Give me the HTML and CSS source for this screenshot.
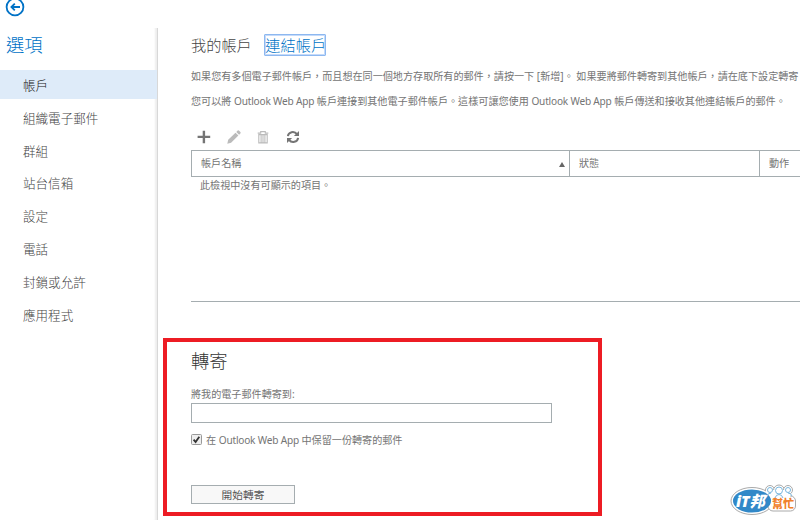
FILE: index.html
```html
<!DOCTYPE html>
<html lang="zh-Hant">
  <head>
    <meta charset="UTF-8" />
    <meta name="viewport" content="width=device-width, initial-scale=1.0" />
    <title>選項 - Outlook Web App</title>
    <link rel="stylesheet" href="styles.css">
  </head>
  <body>
    <header class="topbar">
      <svg class="back" viewBox="0 0 20 20" width="20" height="20">
        <circle cx="10" cy="10" r="8.4" />
        <path d="M15 10H6.5M9.8 6.6L6.4 10l3.4 3.4" />
      </svg>
    </header>

    <div class="layout">
      <nav class="sidebar">
        <h1>選項</h1>
        <ul class="menu">
          <li class="active">帳戶</li>
          <li>組織電子郵件</li>
          <li>群組</li>
          <li>站台信箱</li>
          <li>設定</li>
          <li>電話</li>
          <li>封鎖或允許</li>
          <li>應用程式</li>
        </ul>
      </nav>

      <main class="content">
        <section class="accounts">
          <div class="tabs">
            <span class="tab">我的帳戶</span>
            <span class="tab selected">連結帳戶</span>
          </div>
          <p>如果您有多個電子郵件帳戶，而且想在同一個地方存取所有的郵件，請按一下 [新增]。 如果要將郵件轉寄到其他帳戶，請在底下設定轉寄</p>
          <p>您可以將 <span class="product">Outlook Web App</span> 帳戶連接到其他電子郵件帳戶。這樣可讓您使用 <span class="product">Outlook Web App</span> 帳戶傳送和接收其他連結帳戶的郵件。</p>

          <div class="toolbar">
            <svg class="icon" viewBox="0 0 14 14" width="14" height="14">
              <path d="M5.7 .8h2.4v5h5.1v2.3H8.1v5.1H5.7V8.1H.6V5.8h5.1z" />
            </svg>
            <svg class="icon off" viewBox="0 0 14 14" width="14" height="14">
              <path d="M.3 13.7l.9-3.9L8.5 2.7l2.9 2.9-7.3 7.2zM9.3 1.9L10.7.6q.7-.5 1.4.1l1.3 1.3q.6.7 0 1.4l-1.3 1.4z" />
            </svg>
            <svg class="icon off" viewBox="0 0 14 14" width="14" height="14">
              <path d="M1.7 3.1h3V1.6h4.6v1.5h3M2.8 4.6v8.3h8.4V4.6zM5.1 5v7.5M7 5v7.5M8.9 5v7.5" class="line" />
            </svg>
            <svg class="icon" viewBox="0 0 14 14" width="14" height="14">
              <path d="M1.9 6.2C2.4 1.8 8.3.6 11 4.2M12.1 7.8C11.6 12.2 5.7 13.4 3 9.8" class="arc" />
              <path d="M13 .9v5.2H7.900zM1 13.1V7.900h5.100z" />
            </svg>
          </div>

          <div class="grid-head">
            <div class="col name">帳戶名稱<i class="sort"></i></div>
            <div class="col state">狀態</div>
            <div class="col action">動作</div>
          </div>
          <div class="grid-body">此檢視中沒有可顯示的項目。</div>
        </section>

        <section class="forward">
          <h2>轉寄</h2>
          <label class="field-label" for="address">將我的電子郵件轉寄到:</label>
          <input class="address" id="address" type="text" />
          <div class="keep">
            <svg class="check" viewBox="0 0 11 11" width="11" height="11">
              <rect x=".5" y=".5" width="10" height="10" rx="1" />
              <path d="M2.6 5.7l2 2.4 3.7-5.4" />
            </svg>
            <span>在 <span class="product">Outlook Web App</span> 中保留一份轉寄的郵件</span>
          </div>
          <button class="start" type="button">開始轉寄</button>
        </section>
      </main>
    </div>

    <svg class="badge" viewBox="0 0 68 36" width="68" height="36">
      <g class="people-edge">
        <circle cx="40" cy="6" r="4.5" /><circle cx="49" cy="6.5" r="5.5" /><circle cx="58" cy="6" r="4.5" />
      </g>
      <ellipse class="rim" cx="22" cy="17" rx="21" ry="13.5" />
      <rect class="rim" x="38" y="12" width="27.5" height="15" rx="5" />
      <path class="fill" d="M36 6h24v10H36z" />
      <ellipse class="blue" cx="22" cy="17" rx="19" ry="11.5" />
      <g class="people">
        <circle cx="40" cy="6" r="2.5" /><circle cx="49" cy="6.5" r="3.5" /><circle cx="58" cy="6" r="2.5" />
        <path d="M37 12q1-3 4-3M45 14q1-3.5 4-3.5t4 3.5M58 9q3 0 4 3" />
      </g>
      <text class="it" x="6" y="23">iT邦</text>
      <text class="help" x="42" y="24">幫忙</text>
    </svg>
  </body>
</html>
```
FILE: styles.css
```css
:root {
  --accent: #0072c6;
  --text: #747474;
  --line: #a5adb0;
  --red: #ed1c24;
}

* {
  box-sizing: border-box;
}

body {
  margin: 0;
  height: 520px;
  overflow: hidden;
  background: #fff;
  color: var(--text);
  font-family: "Noto Sans", "Noto Sans CJK TC", sans-serif;
  font-size: 10.1px;
}

.topbar {
  display: flex;
  height: 28px;
  padding-left: 5px;
}

.back {
  margin-top: -3px;
  fill: none;
  stroke: var(--accent);
  stroke-width: 1.8;
}

.layout {
  display: flex;
  height: 492px;
}

.sidebar {
  flex: none;
  width: 158px;
  border-right: 1px solid #d8d8d8;
  box-shadow: inset -3px 0 2px -1px #eee;
}

h1 {
  margin: 0;
  padding-left: 6px;
  height: 42px;
  line-height: 34px;
  font-size: 18.3px;
  font-weight: 300;
  color: var(--accent);
}

.menu {
  margin: 0;
  padding: 0;
  width: 157px;
  list-style: none;
  font-size: 12.55px;
  font-weight: 300;
  color: #444;
}

.menu li {
  height: 29px;
  margin-bottom: 3.8px;
  padding-left: 23px;
  line-height: 32px;
}

.menu .active {
  background: #deebf9;
  color: #222;
}

.content {
  flex: 1;
  min-width: 0;
  padding-left: 5px;
}

.accounts {
  height: 310px;
  padding: 6px 0 0 28px;
  white-space: nowrap;
}

.tabs {
  display: flex;
  gap: 12.6px;
  height: 22px;
  font-size: 15.2px;
  font-weight: 300;
  line-height: 20px;
  color: #444;
}

.tab {
  padding-top: 1px;
}

.tab.selected {
  padding: 0;
  width: 62px;
  border: 1px solid #8db8f0;
  border-radius: 1px;
  box-shadow: inset 0 0 0 1px #c4dafa;
  color: var(--accent);
}

p {
  margin: 0;
  height: 25px;
  line-height: 25px;
}

.tabs + p {
  margin-top: 8px;
}

.product {
  letter-spacing: -0.2px;
}

.toolbar {
  display: flex;
  gap: 15.5px;
  height: 36px;
  padding: 16px 0 0 6px;
}

.icon {
  fill: #757575;
}

.icon.off {
  fill: #bbb;
}

.icon .line {
  fill: none;
  stroke: #bbb;
  stroke-width: 1.1;
}

.icon .arc {
  fill: none;
  stroke: #757575;
  stroke-width: 2;
}

.grid-head {
  display: flex;
  height: 27px;
  border: 1px solid var(--line);
  border-right: none;
  line-height: 24px;
}

.col {
  padding-left: 9px;
  border-right: 1px solid var(--line);
}

.name {
  display: flex;
  justify-content: space-between;
  width: 378px;
}

.state {
  width: 190px;
}

.action {
  border: none;
}

.sort {
  margin: 11px 4px 0 0;
  width: 6px;
  height: 5px;
  background: #666;
  clip-path: polygon(50% 0, 100% 100%, 0 100%);
}

.grid-body {
  height: 125px;
  padding-left: 9px;
  border-bottom: 1px solid var(--line);
  line-height: 17px;
}

.forward {
  display: flex;
  flex-direction: column;
  align-items: flex-start;
  width: 439px;
  height: 178px;
  padding: 6px 0 0 24px;
  border: 4px solid var(--red);
}

h2 {
  margin: 0;
  height: 37px;
  line-height: 26px;
  font-size: 18.3px;
  font-weight: 300;
  color: #333;
}

.field-label {
  height: 18px;
  line-height: 18px;
}

.address {
  width: 361px;
  height: 20px;
  margin: 0;
  padding: 0 4px;
  border: 1px solid var(--line);
}

.keep {
  display: flex;
  align-items: center;
  gap: 4px;
  height: 16px;
  margin-top: 8px;
}

.check rect {
  fill: #eee;
  stroke: #999;
}

.check path {
  fill: none;
  stroke: #333;
  stroke-width: 1.8;
}

.start {
  width: 104px;
  height: 19px;
  margin-top: 38px;
  padding: 0;
  border: 1px solid var(--line);
  background: #f8f8f8;
  color: #555;
  font: inherit;
  font-size: 10.7px;
  line-height: 19px;
}

.badge {
  position: absolute;
  left: 730px;
  top: 484px;
}

.rim,
.people-edge {
  fill: #fff;
  stroke: #aaa;
  stroke-width: 1;
}

.fill {
  fill: #fff;
}

.blue {
  fill: #3188c8;
}

.people {
  fill: #fff;
  stroke: #79b7de;
  stroke-width: 1;
}

.it,
.help {
  font-family: "Noto Sans", "Noto Sans CJK TC", sans-serif;
  font-weight: 900;
}

.it {
  fill: #fff;
  font-size: 15.5px;
  font-style: italic;
}

.help {
  fill: #f0812b;
  font-size: 11px;
}
```
